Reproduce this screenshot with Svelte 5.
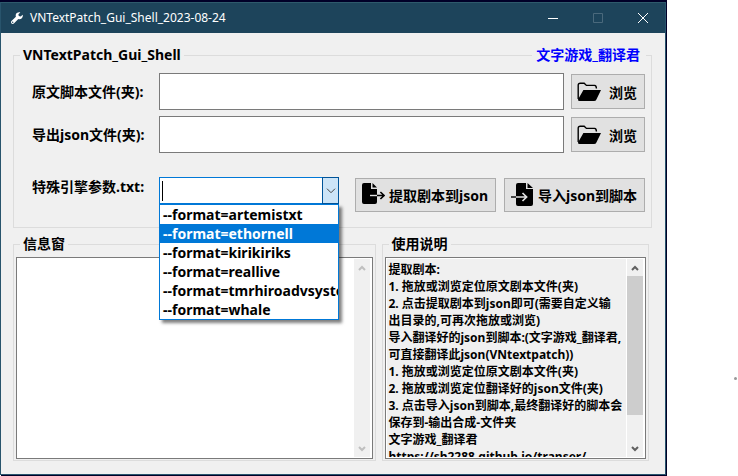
<script>
  const formats = [
    '--format=artemistxt',
    '--format=ethornell',
    '--format=kirikiriks',
    '--format=reallive',
    '--format=tmrhiroadvsystem',
    '--format=whale'
  ];

  const help = [
    '提取剧本:',
    '1. 拖放或浏览定位原文剧本文件(夹)',
    '2. 点击提取剧本到json即可(需要自定义输',
    '出目录的,可再次拖放或浏览)',
    '导入翻译好的json到脚本:(文字游戏_翻译君,',
    '可直接翻译此json(VNtextpatch))',
    '1. 拖放或浏览定位原文剧本文件(夹)',
    '2. 拖放或浏览定位翻译好的json文件(夹)',
    '3. 点击导入json到脚本,最终翻译好的脚本会',
    '保存到-输出合成-文件夹',
    '文字游戏_翻译君',
    'https://sh2288.github.io/transer/'
  ].join('\n');

  let source = $state('');
  let target = $state('');
  let engine = $state('');
  let highlighted = $state('--format=ethornell');
  let open = $state(true);
  let log = $state('');
</script>

{#snippet folder()}
  <svg class="folder" viewBox="0 0 24 20" aria-hidden="true">
    <path d="M1.2 17V3.2Q1.2 1.2 3.2 1.2H7.2L9.4 3.4H17.6Q19.4 3.6 19.4 6.4" fill="none" stroke="#000" stroke-width="1.4" />
    <path d="M6.4 8H24L19.4 17.4Q18.8 19 17 19H2.6Q.8 19 1 17.4Z" />
  </svg>
{/snippet}

{#snippet chevron(down)}
  <svg class="chevron" class:down viewBox="0 0 8 6" aria-hidden="true">
    <path d="M1 5L4 2L7 5" fill="none" stroke="currentColor" stroke-width="2" />
  </svg>
{/snippet}

<div class="page">
  <main class="window">
    <header>
      <svg class="wrench" viewBox="0 0 12 12" aria-hidden="true">
        <path d="M11.7 2.7L9.7 4.6L7.8 4.1L7.4 2.3L9.3.4C7.5-.2 5.7.6 5 2.1C4.6 3 4.6 3.8 4.9 4.7L.5 9.1C-.1 9.8-.1 10.8.5 11.5C1.2 12.1 2.2 12.1 2.9 11.5L7.3 7.1C10 8 12.5 5.5 11.7 2.7ZM1.7 11A.7.7 0 1 1 1.7 9.6A.7.7 0 0 1 1.7 11Z" fill="#fff" fill-rule="evenodd" />
      </svg>
      <h1>VNTextPatch_Gui_Shell_2023-08-24</h1>
      <div class="controls">
        <button aria-label="最小化"><svg viewBox="0 0 10 10"><path d="M0 5.5H10" /></svg></button>
        <button aria-label="最大化" disabled><svg viewBox="0 0 10 10"><path d="M.5.5H9.5V9.5H.5Z" /></svg></button>
        <button aria-label="关闭"><svg viewBox="0 0 10 10"><path d="M0 0L10 10M10 0L0 10" /></svg></button>
      </div>
    </header>

    <div class="body">
      <fieldset class="files">
        <legend>VNTextPatch_Gui_Shell</legend>
        <a class="author" href="https://sh2288.github.io/transer/">文字游戏_翻译君</a>
        <div class="form">
          <div class="row">
            <label for="source">原文脚本文件(夹):</label>
            <input id="source" class="path" type="text" bind:value={source} />
            <button class="push browse">{@render folder()}浏览</button>
          </div>
          <div class="row">
            <label for="target">导出json文件(夹):</label>
            <input id="target" class="path" type="text" bind:value={target} />
            <button class="push browse">{@render folder()}浏览</button>
          </div>
          <div class="row actions">
            <label for="engine">特殊引擎参数.txt:</label>
            <div class="combo">
              <div class="edit">
                <span class="caret"></span>
                <input id="engine" type="text" bind:value={engine} />
                <button class="drop" aria-label="展开" onclick={() => (open = !open)}>
                  <svg viewBox="0 0 10 6" aria-hidden="true"><path d="M1 .7L5 4.7L9 .7" fill="none" stroke="#444" /></svg>
                </button>
              </div>
              {#if open}
                <select size="6" aria-label="特殊引擎参数" bind:value={highlighted}>
                  {#each formats as f}
                    <option value={f}>{f}</option>
                  {/each}
                </select>
              {/if}
            </div>
            <div class="transfer">
              <button class="push">
                <svg viewBox="0 0 24 24" aria-hidden="true">
                  <path d="M3 0H10V6H16V19Q16 21 14 21H3Q1 21 1 19V2Q1 0 3 0ZM11.5 0L16 4.6H11.5Z" />
                  <path d="M9 12.5H16" stroke="#e1e1e1" stroke-width="1.4" />
                  <path d="M16 12.5H23M19.4 9L23 12.5L19.4 16" fill="none" stroke="#000" stroke-width="1.6" />
                </svg>
                提取剧本到json
              </button>
              <button class="push">
                <svg viewBox="0 0 24 24" aria-hidden="true">
                  <path d="M8 0H16V6H23V21Q23 23 21 23H8Q6 23 6 21V2Q6 0 8 0ZM17.5 0L23 5H17.5Z" />
                  <path d="M1 14H6" stroke="#000" stroke-width="1.4" />
                  <path d="M6 14H16M12.5 10L16.6 14L12.5 18" fill="none" stroke="#e1e1e1" stroke-width="1.7" />
                </svg>
                导入json到脚本
              </button>
            </div>
          </div>
        </div>
      </fieldset>

      <div class="panels">
        <fieldset class="panel log">
          <legend><label for="log">信息窗</label></legend>
          <div class="box">
            <textarea id="log" bind:value={log}></textarea>
            <div class="scroll idle">
              <button aria-label="向上">{@render chevron(false)}</button>
              <button aria-label="向下">{@render chevron(true)}</button>
            </div>
          </div>
        </fieldset>
        <fieldset class="panel guide">
          <legend><label for="help">使用说明</label></legend>
          <div class="box">
            <textarea id="help" readonly value={help}></textarea>
            <div class="scroll">
              <button aria-label="向上">{@render chevron(false)}</button>
              <div class="track"><div class="thumb"></div></div>
              <button aria-label="向下">{@render chevron(true)}</button>
            </div>
          </div>
        </fieldset>
      </div>
    </div>
  </main>
  <aside><span class="dot"></span></aside>
</div>

<style>
  :global(body) { background: #fff; }
  .page, .page :is(button, input, select, option, textarea) {
    font-family: "Noto Sans", "Noto Sans CJK SC", sans-serif;
    font-weight: 700;
    font-size: 14px;
    color: #000;
    box-sizing: border-box;
  }
  .page :is(button, input, select, textarea) {
    margin: 0;
    padding: 0;
    border: 0;
    border-radius: 0;
    outline: 0;
    appearance: none;
  }
  .page { display: flex; min-height: 100vh; line-height: 20px; }
  .window {
    flex: 1;
    min-width: 0;
    display: flex;
    flex-direction: column;
    box-sizing: border-box;
    background: #f0f0f0;
    border: 1px solid #28546c;
    border-top-color: #2e5a6c;
    box-shadow: 0 -2px #000028, 1px 1px #000028, 1px -2px #000028;
    margin: 2px 1px 1px 0;
  }
  aside { flex: none; width: 71px; display: flex; justify-content: flex-end; align-items: flex-end; padding: 0 1px 96px 0; box-sizing: border-box; }
  .dot { width: 3px; height: 3px; border-radius: 50%; background: #999; }

  header { display: flex; align-items: center; height: 30px; padding-left: 10px; background: #1d445b; }
  .wrench { width: 12px; height: 12px; margin-right: 7px; }
  h1 { flex: 1; margin: 0; font-size: 12px; font-weight: 400; color: #fff; }
  .controls { display: flex; }
  .controls button { width: 45px; height: 30px; background: none; display: grid; place-items: center; }
  .controls svg { width: 10px; height: 10px; fill: none; stroke: #fff; overflow: visible; }
  .controls button:disabled svg { stroke: #4a697c; }

  .body { flex: 1; display: flex; flex-direction: column; padding: 12px 13px 13px 12px; }
  fieldset { position: relative; min-width: 0; margin: 0; padding: 0 6px; border: 1px solid #dcdcdc; }
  legend { padding: 0 3px; }
  .author { position: absolute; top: -20px; right: 5px; padding: 0 6px 0 4px; background: #f0f0f0; color: #00f; text-decoration: none; }
  .form { display: flex; flex-direction: column; gap: 6px; padding: 8px 0 15px 12px; }
  .row { display: flex; align-items: center; gap: 7px; }
  .row > label { flex: none; width: 120px; white-space: nowrap; }
  .page .path { flex: 1; min-width: 0; height: 37px; border: 1px solid #7a7a7a; padding: 0 4px; background: #fff; }
  .page .push {
    display: flex;
    align-items: center;
    gap: 4px;
    padding: 0 5px;
    border: 1px solid #adadad;
    background: #e1e1e1;
    white-space: nowrap;
  }
  .page .browse { width: 74px; height: 35px; gap: 8px; }
  .folder { width: 24px; height: 20px; }
  .actions { align-items: flex-start; margin-top: 18px; }
  .combo { position: relative; flex: 1; min-width: 0; }
  .edit { display: flex; align-items: center; height: 27px; box-sizing: border-box; border: 1px solid #0078d7; background: #fff; }
  .edit input { flex: 1; min-width: 0; height: 25px; background: none; }
  .caret { flex: none; width: 1px; height: 20px; margin-left: 2px; background: #000; }
  .page .drop { flex: none; width: 17px; height: 27px; margin-right: -1px; border: 1px solid #005499; background: #cce4f7; display: grid; place-items: center; }
  .drop svg { width: 10px; height: 6px; }
  .page select {
    position: absolute;
    top: 27px;
    left: 0;
    z-index: 2;
    width: 100%;
    height: 116px;
    border: 1px solid #0078d7;
    background: #fff;
    overflow: hidden;
    box-shadow: 3px 3px 3px rgba(0, 0, 0, .5);
  }
  .page option { height: 19px; min-height: 19px; padding: 0 3px; line-height: 19px; white-space: nowrap; }
  .page option:checked { background: #0078d7 linear-gradient(#0078d7, #0078d7); color: #fff; -webkit-text-fill-color: #fff; }
  .transfer { flex: none; display: flex; gap: 8px; margin: 1px 0 0 9px; }
  .transfer .push { width: 141px; height: 34px; }
  .transfer svg { flex: none; width: 24px; height: 24px; }

  .panels { flex: 1; display: flex; gap: 6px; margin-top: 6px; padding-right: 3px; }
  .panel { display: flex; flex-direction: column; padding: 3px 2px 1px; }
  .panel legend { margin-left: 4px; }
  .log { flex: 364; }
  .guide { flex: 267; }
  .box { display: flex; height: 100%; min-height: 160px; box-sizing: border-box; border: 1px solid #7a7a7a; padding: 1px; background: #fff; }
  .page textarea { flex: 1; min-width: 0; resize: none; overflow: hidden; background: #fff; }
  .page .guide textarea { background: #f0f0f0; font-size: 12px; line-height: 17px; padding: 2px 0 0 2px; margin-right: 1px; word-break: break-all; }
  .scroll { flex: none; display: flex; flex-direction: column; justify-content: space-between; width: 16px; margin-right: 1px; background: #f0f0f0; }
  .scroll button { height: 17px; background: none; display: grid; place-items: center; }
  .page .scroll button { color: #606060; }
  .page .idle button { color: #bfbfbf; }
  .chevron { width: 8px; height: 6px; }
  .down { transform: rotate(180deg); }
  .track { flex: 1; }
  .thumb { height: 85%; background: #cdcdcd; }
</style>
